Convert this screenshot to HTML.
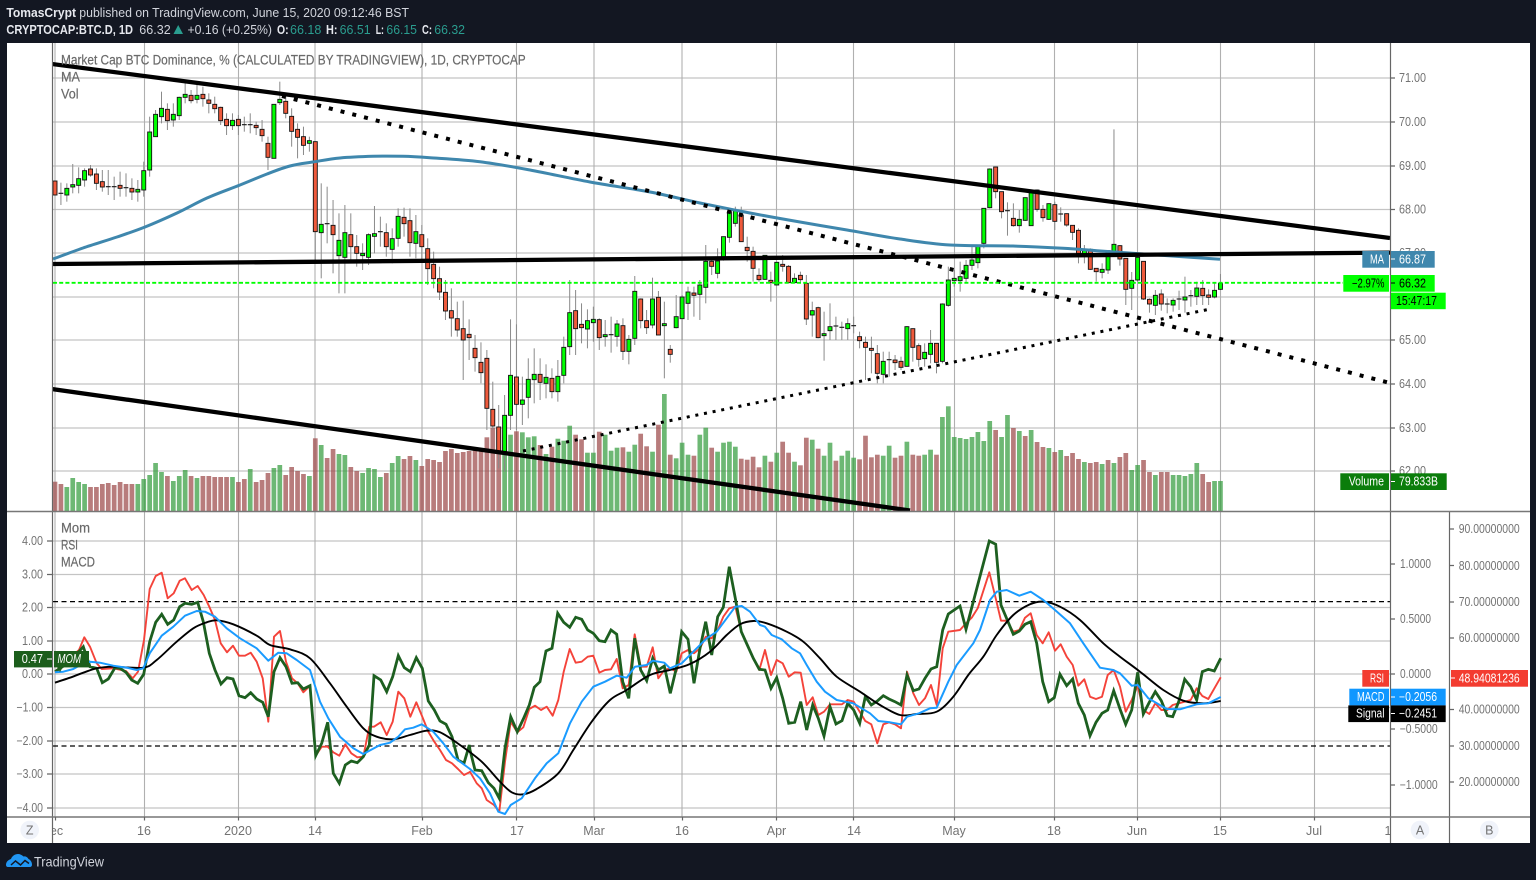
<!DOCTYPE html>
<html><head><meta charset="utf-8"><title>BTC Dominance</title>
<style>
html,body{margin:0;padding:0;background:#131722;width:1536px;height:880px;overflow:hidden}
svg{display:block;font-family:"Liberation Sans",sans-serif;filter:blur(.3px)}
.h{font-size:13px;fill:#d1d4dc}.b{font-weight:bold;fill:#e6e8ee}.t{fill:#2a9d8f}
.l{font-size:13.5px;fill:#6a6a6a;stroke:#6a6a6a;stroke-width:.2px}
.a{font-size:12.5px;fill:#737373}
.w{font-size:12.5px;fill:#fff}.k{font-size:12.5px;fill:#000}
</style></head><body>
<svg id="s" width="1536" height="880" viewBox="0 0 1536 880" xmlns="http://www.w3.org/2000/svg">
<defs>
<clipPath id="c1"><rect x="53" y="43" width="1337" height="468"/></clipPath>
<clipPath id="c2"><rect x="53" y="512" width="1337" height="305"/></clipPath>
<clipPath id="c3"><rect x="53" y="818" width="1337" height="25"/></clipPath>
</defs>
<rect x="7" y="43" width="1523" height="800" fill="#fff"/>
<g id="grid" stroke="#c4c4c4" stroke-width="1.2" fill="none"></g>
<g id="vol" clip-path="url(#c1)"></g>
<g id="cand" clip-path="url(#c1)"></g>
<g clip-path="url(#c1)" fill="none">
<path id="ma" stroke="#3f87ad" stroke-width="3"/>
<path d="M52 64L1390 238" stroke="#000" stroke-width="4.3"/>
<path d="M52 264L1390 252.6" stroke="#000" stroke-width="4.3"/>
<path d="M52 389L910 510.5" stroke="#000" stroke-width="4.3"/>
<path d="M282 96L1390 383" stroke="#000" stroke-width="4" stroke-dasharray="4 8.1"/>
<path d="M523 451L1208 309.5" stroke="#000" stroke-width="3" stroke-dasharray="3 5.8"/>
<path d="M53 282.8H1343" stroke="#00ff00" stroke-width="1.8" stroke-dasharray="4 2.2"/>
</g>
<g clip-path="url(#c2)" fill="none" stroke-linejoin="round">
<path d="M53 601.6H1390M53 746H1390" stroke="#000" stroke-width="1.2" stroke-dasharray="5 3.5"/>
<path id="rsi" stroke="#f4433a" stroke-width="1.9"/>
<path id="mom" stroke="#1d5f20" stroke-width="2.8" stroke-linejoin="miter"/>
<path id="sig" stroke="#000" stroke-width="1.9"/>
<path id="mac" stroke="#1a9bff" stroke-width="2"/>
</g>
<!-- axes -->
<g stroke="#666" stroke-width="1.2" fill="none">
<path d="M52.5 43V843M1390.5 43V843M1449.5 511V843"/>
<path d="M7 511.5H1530M7 817H1530" stroke="#777" stroke-width="1.4"/>
<path d="M47 541h5M47 574.5h5M47 607.5h5M47 641h5M47 674h5M47 707.5h5M47 741h5M47 774h5M47 808h5"/>
<path d="M1391 78h4M1391 122h4M1391 166h4M1391 209.5h4M1391 340h4M1391 384h4M1391 428h4M1391 471h4M1391 564h4M1391 619h4M1391 674h4M1391 729h4M1391 785h4"/>
<path d="M1450 529h4M1450 565.5h4M1450 602h4M1450 638h4M1450 709.5h4M1450 746h4M1450 782h4"/>
<path d="M55.5 817v3.5M144.5 817v3.5M238.5 817v3.5M315.5 817v3.5M422.5 817v3.5M516.5 817v3.5M594.5 817v3.5M682.5 817v3.5M776.5 817v3.5M853.5 817v3.5M954.5 817v3.5M1054.5 817v3.5M1137.5 817v3.5M1220.5 817v3.5M1314.5 817v3.5"/>
</g>
<!-- header -->
<text class="h b" x="6.4" y="17" textLength="69.6" lengthAdjust="spacingAndGlyphs">TomasCrypt</text>
<text class="h" x="79.3" y="17" textLength="329.7" lengthAdjust="spacingAndGlyphs">published on TradingView.com, June 15, 2020 09:12:46 BST</text>
<text class="h b" x="6.4" y="34" textLength="126.6" lengthAdjust="spacingAndGlyphs">CRYPTOCAP:BTC.D, 1D</text>
<text class="h" x="139.3" y="34" textLength="31.4" lengthAdjust="spacingAndGlyphs">66.32</text>
<polygon points="173.5,34 183,34 178.2,25" fill="#2a9d8f"/>
<text class="h" x="187.5" y="34" textLength="84.5" lengthAdjust="spacingAndGlyphs">+0.16 (+0.25%)</text>
<text class="h b" x="277" y="34" textLength="11.6" lengthAdjust="spacingAndGlyphs">O:</text>
<text class="h t" x="290" y="34" textLength="31.4" lengthAdjust="spacingAndGlyphs">66.18</text>
<text class="h b" x="326" y="34" textLength="11.5" lengthAdjust="spacingAndGlyphs">H:</text>
<text class="h t" x="339.6" y="34" textLength="31.1" lengthAdjust="spacingAndGlyphs">66.51</text>
<text class="h b" x="375.7" y="34" textLength="8.3" lengthAdjust="spacingAndGlyphs">L:</text>
<text class="h t" x="386.4" y="34" textLength="30.6" lengthAdjust="spacingAndGlyphs">66.15</text>
<text class="h b" x="422" y="34" textLength="10" lengthAdjust="spacingAndGlyphs">C:</text>
<text class="h t" x="434.3" y="34" textLength="30.7" lengthAdjust="spacingAndGlyphs">66.32</text>
<!-- legends -->
<text class="l" x="61" y="64.5" textLength="464.7" lengthAdjust="spacingAndGlyphs">Market Cap BTC Dominance, % (CALCULATED BY TRADINGVIEW), 1D, CRYPTOCAP</text>
<text class="l" x="61" y="81.5" textLength="19" lengthAdjust="spacingAndGlyphs">MA</text>
<text class="l" x="61" y="98.5" textLength="17.5" lengthAdjust="spacingAndGlyphs">Vol</text>
<text class="l" x="61" y="532.5" textLength="29" lengthAdjust="spacingAndGlyphs">Mom</text>
<text class="l" x="61" y="549.5" textLength="17" lengthAdjust="spacingAndGlyphs">RSI</text>
<text class="l" x="61" y="566.5" textLength="34" lengthAdjust="spacingAndGlyphs">MACD</text>
<!-- left axis -->
<text class="a" x="22" y="545" textLength="21" lengthAdjust="spacingAndGlyphs">4.00</text>
<text class="a" x="22" y="578.5" textLength="21" lengthAdjust="spacingAndGlyphs">3.00</text>
<text class="a" x="22" y="611.5" textLength="21" lengthAdjust="spacingAndGlyphs">2.00</text>
<text class="a" x="22" y="645" textLength="21" lengthAdjust="spacingAndGlyphs">1.00</text>
<text class="a" x="22" y="678" textLength="21" lengthAdjust="spacingAndGlyphs">0.00</text>
<text class="a" x="16.5" y="711.5" textLength="26.5" lengthAdjust="spacingAndGlyphs">−1.00</text>
<text class="a" x="16.5" y="745" textLength="26.5" lengthAdjust="spacingAndGlyphs">−2.00</text>
<text class="a" x="16.5" y="778" textLength="26.5" lengthAdjust="spacingAndGlyphs">−3.00</text>
<text class="a" x="16.5" y="812" textLength="26.5" lengthAdjust="spacingAndGlyphs">−4.00</text>
<!-- price axis -->
<text class="a" x="1399" y="82" textLength="27" lengthAdjust="spacingAndGlyphs">71.00</text>
<text class="a" x="1399" y="126" textLength="27" lengthAdjust="spacingAndGlyphs">70.00</text>
<text class="a" x="1399" y="170" textLength="27" lengthAdjust="spacingAndGlyphs">69.00</text>
<text class="a" x="1399" y="213.5" textLength="27" lengthAdjust="spacingAndGlyphs">68.00</text>
<text class="a" x="1399" y="257" textLength="27" lengthAdjust="spacingAndGlyphs">67.00</text>
<text class="a" x="1399" y="344" textLength="27" lengthAdjust="spacingAndGlyphs">65.00</text>
<text class="a" x="1399" y="388" textLength="27" lengthAdjust="spacingAndGlyphs">64.00</text>
<text class="a" x="1399" y="432" textLength="27" lengthAdjust="spacingAndGlyphs">63.00</text>
<text class="a" x="1399" y="475" textLength="27" lengthAdjust="spacingAndGlyphs">62.00</text>
<text class="a" x="1400" y="568" textLength="31" lengthAdjust="spacingAndGlyphs">1.0000</text>
<text class="a" x="1400" y="623" textLength="31" lengthAdjust="spacingAndGlyphs">0.5000</text>
<text class="a" x="1400" y="678" textLength="31" lengthAdjust="spacingAndGlyphs">0.0000</text>
<text class="a" x="1399.7" y="733" textLength="38" lengthAdjust="spacingAndGlyphs">−0.5000</text>
<text class="a" x="1399.7" y="789" textLength="38" lengthAdjust="spacingAndGlyphs">−1.0000</text>
<text class="a" x="1458.7" y="533" textLength="61" lengthAdjust="spacingAndGlyphs">90.00000000</text>
<text class="a" x="1458.7" y="570" textLength="61" lengthAdjust="spacingAndGlyphs">80.00000000</text>
<text class="a" x="1458.7" y="606" textLength="61" lengthAdjust="spacingAndGlyphs">70.00000000</text>
<text class="a" x="1458.7" y="642" textLength="61" lengthAdjust="spacingAndGlyphs">60.00000000</text>
<text class="a" x="1458.7" y="713.5" textLength="61" lengthAdjust="spacingAndGlyphs">40.00000000</text>
<text class="a" x="1458.7" y="750" textLength="61" lengthAdjust="spacingAndGlyphs">30.00000000</text>
<text class="a" x="1458.7" y="786" textLength="61" lengthAdjust="spacingAndGlyphs">20.00000000</text>
<!-- time axis -->
<g clip-path="url(#c3)" text-anchor="middle">
<text class="a" x="52" y="835">Dec</text>
<text class="a" x="144" y="835">16</text>
<text class="a" x="238" y="835">2020</text>
<text class="a" x="315" y="835">14</text>
<text class="a" x="422" y="835">Feb</text>
<text class="a" x="517" y="835">17</text>
<text class="a" x="594" y="835">Mar</text>
<text class="a" x="682" y="835">16</text>
<text class="a" x="776.5" y="835">Apr</text>
<text class="a" x="854" y="835">14</text>
<text class="a" x="954" y="835">May</text>
<text class="a" x="1054" y="835">18</text>
<text class="a" x="1137" y="835">Jun</text>
<text class="a" x="1220" y="835">15</text>
<text class="a" x="1314" y="835">Jul</text>
<text class="a" x="1388" y="835">1</text>
</g>
<g text-anchor="middle">
<circle cx="29.7" cy="830" r="9.3" fill="#f0f3fa"/><text class="a" x="29.7" y="834.5">Z</text>
<circle cx="1420" cy="830" r="9.3" fill="#f0f3fa"/><text class="a" x="1420" y="834.5">A</text>
<circle cx="1489.3" cy="830" r="9.3" fill="#f0f3fa"/><text class="a" x="1489.3" y="834.5">B</text>
</g>
<!-- price labels -->
<rect x="1362.3" y="251" width="26.7" height="16.7" fill="#3f87ad"/><rect x="1391" y="251" width="43.7" height="16.7" fill="#3f87ad"/>
<text class="w" x="1370" y="263.5" textLength="14" lengthAdjust="spacingAndGlyphs">MA</text>
<text class="w" x="1399" y="263.5" textLength="27" lengthAdjust="spacingAndGlyphs">66.87</text>
<path d="M1391 259h4" stroke="#fff"/>
<rect x="1343.3" y="275" width="45.7" height="16.7" fill="#00ff00"/><rect x="1391" y="275" width="43.7" height="16.7" fill="#00ff00"/>
<text class="k" x="1352" y="287.5" textLength="32.5" lengthAdjust="spacingAndGlyphs">−2.97%</text>
<text class="k" x="1399" y="287.5" textLength="27" lengthAdjust="spacingAndGlyphs">66.32</text>
<path d="M1391 283h4" stroke="#000"/>
<rect x="1391" y="292.7" width="54.7" height="16.5" fill="#00ff00"/>
<text class="k" x="1396" y="305" textLength="41" lengthAdjust="spacingAndGlyphs">15:47:17</text>
<rect x="1340.3" y="473.3" width="48.7" height="16.7" fill="#0b7d0b"/><rect x="1391" y="473.3" width="55.7" height="16.7" fill="#0b7d0b"/>
<text class="w" x="1348.7" y="485.7" textLength="35.3" lengthAdjust="spacingAndGlyphs">Volume</text>
<text class="w" x="1399" y="485.7" textLength="39" lengthAdjust="spacingAndGlyphs">79.833B</text>
<path d="M1391 481.5h4" stroke="#fff"/>
<rect x="1362.3" y="670" width="26.7" height="16.7" fill="#f33c30"/><rect x="1451" y="670" width="77" height="16.7" fill="#f33c30"/>
<text class="w" x="1370" y="682.5" textLength="14" lengthAdjust="spacingAndGlyphs">RSI</text>
<text class="w" x="1458.7" y="682.5" textLength="61" lengthAdjust="spacingAndGlyphs">48.94081236</text>
<path d="M1451 678h4" stroke="#fff"/>
<rect x="1349.3" y="688.7" width="39.7" height="16.7" fill="#1097ff"/><rect x="1391" y="688.7" width="54.7" height="16.7" fill="#1097ff"/>
<text class="w" x="1357" y="701" textLength="27.5" lengthAdjust="spacingAndGlyphs">MACD</text>
<text class="w" x="1399" y="701" textLength="38" lengthAdjust="spacingAndGlyphs">−0.2056</text>
<path d="M1391 697h4" stroke="#fff"/>
<rect x="1348.3" y="705.4" width="40.7" height="16.7" fill="#000"/><rect x="1391" y="705.4" width="54.7" height="16.7" fill="#000"/>
<text class="w" x="1356" y="717.7" textLength="28.5" lengthAdjust="spacingAndGlyphs">Signal</text>
<text class="w" x="1399" y="717.7" textLength="38" lengthAdjust="spacingAndGlyphs">−0.2451</text>
<path d="M1391 713.5h4" stroke="#fff"/>
<!-- MOM label -->
<rect x="14" y="651" width="38" height="16.4" fill="#1c5e1c"/>
<rect x="54" y="651" width="35" height="16.4" fill="#1c5e1c"/>
<polygon points="57,667 63,667 60,672" fill="#1c5e1c"/>
<text class="w" x="21.7" y="663" textLength="21.3" lengthAdjust="spacingAndGlyphs">0.47</text>
<text class="w" x="57.5" y="663" textLength="23.5" lengthAdjust="spacingAndGlyphs" font-style="italic">MOM</text>
<path d="M47 659h5" stroke="#fff"/>
<!-- footer logo -->
<path fill="#2196f3" d="M6 865c0-3 2-5 5-6 1-3 4-5 7-5 2 0 4 1 5.500 2.500 2-.5 4 .5 5 2.500 2 1 3.500 3 3.500 5.500 0 2-1 2.500-2.500 2.500H8c-1.300 0-2-1-2-2z"/>
<path d="M11 865l4.500-4 5 4 4.500-4.500 4 3" fill="none" stroke="#131722" stroke-width="1.500"/>
<text x="34" y="866.500" font-size="14" fill="#d1d4dc" textLength="70" lengthAdjust="spacingAndGlyphs">TradingView</text>
</svg>
<script>
var NS="http://www.w3.org/2000/svg";
function el(p,t,a){var e=document.createElementNS(NS,t);for(var k in a)e.setAttribute(k,a[k]);document.getElementById(p).appendChild(e);return e}
var X=function(i){return 55+5.916*i};
// grid
var gp="";[78,122,166,209.5,253,297,340,384,428,471,541,574.5,607.5,641,674,707.5,741,774,808].forEach(function(y){gp+="M53 "+y+"H1390"});
el("grid","path",{d:gp});
var vp="";[55,144.5,238.5,315,422,516.500,594,682,776.500,853.500,954.500,1054.500,1137.500,1220.500,1314.500].forEach(function(x){vp+="M"+x+" 43V511M"+x+" 512V817"});
el("grid","path",{d:vp,stroke:"#b0b0b0","stroke-width":"1.1"});
// volume
function vols(s,off,start){s.split(" ").forEach(function(t,j){var i=start+j,y=off+(+t.slice(1))/3;
el("vol","rect",{x:(X(i)-2.35).toFixed(2),y:y.toFixed(1),width:4.7,height:(511-y).toFixed(1),fill:t[0]=="r"?"rgba(160,80,80,.75)":"rgba(60,160,70,.75)"})})}
vols("r155 r162 g171 g144 g156 g162 r171 r171 r162 r159 r165 r156 r162 r162 g162 g147 g135 g99 g126 r138 g153 g138 g120 r138 g144 r138 r138 r141 r141 r141 g141 r156 r147 g117 r156 r150 r129 g114 g105 r135 r111 r123 r132 g138 r25 g45 r84 r57 g72 g75 r111 r123 g129 g114 g117 g141 r129 g99 g78 r87 r78 g90 r108 r87 r90 r96 r63 r57 r69 r66 r63 r60 r63",430,0);
vols("r622 r593 r595 g600 g614 r604 g607 g622 g619 r645 g672 r650 g626 g632 g587 r614 r628 g668 g668 r605 g614 g662 g653 r652 g665 g644 r611 r649 g665 r584 g492 r674 g685 g638 g674 r677 g614 g593 r653 g665 g638 g635 g650 r686 r689 r680 r712 g677 r695 g668 r635 r668 g695 r706 r623 g629 r656 g677 g638 r692 g677 g662 g683 r688 r617 r682 r674 g677 g647 r683 r677 g635 r674 r677 g674 g659 r674 g561 g529",230,73);
var abs="g437 g438 g439 g437 g432 g441 g421 r430 g437 g415 r428 g431 r436 g430 r442 r447 g448 r452 g450 r456 r453 r459 g462 r463 r462 g464 r460 g463 r457 r453 g470 g465 r460 r472 g475 r472 r472 g475 g475 g476 g474 g463 r474 r482 g481 g481";
abs.split(" ").forEach(function(t,j){var i=152+j,y=+t.slice(1);el("vol","rect",{x:(X(i)-2.35).toFixed(2),y:y,width:4.7,height:511-y,fill:t[0]=="r"?"rgba(160,80,80,.75)":"rgba(60,160,70,.75)"})});
// candles: type,top,bot,wickTop,wickBot in zoom coordinates
function cand(s,off,start){s.split(";").forEach(function(t,j){var a=t.split(","),i=start+j,x=X(i),f=function(v){return off+(+v)/3};
el("cand","line",{x1:x,x2:x,y1:f(a[3]),y2:f(a[4]),stroke:"#8a8a8a","stroke-width":"1"});
if(a[0]=="d"){el("cand","rect",{x:x-2.4,y:f(a[1])-.6,width:4.8,height:1.2,fill:"#222"})}
else{el("cand","rect",{x:x-2,y:f(a[1]),width:4,height:Math.max(f(a[2])-f(a[1]),1),fill:a[0]=="r"?"#ee5a3c":"#00ff00",stroke:"#111","stroke-width":".9"})}})}
cand("r,303,345,303,345;d,340,340,308,375;g,325,345,310,365;g,314,321,252,340;g,296,316,262,340;g,272,300,265,320;r,267,285,255,290;r,282,310,265,330;r,305,321,270,335;d,320,320,270,345;d,320,320,290,360;r,316,325,275,350;d,323,323,280,350;r,325,336,295,360;g,328,336,300,365;g,272,330,245,350;g,156,270,110,290;g,103,170,90,170;g,85,110,35,130;r,88,122,70,150;g,103,120,70,140;g,52,107,50,120;g,43,52,10,70;r,46,62,30,70;g,46,58,15,70;r,43,56,20,80;r,60,70,40,100;r,73,86,50,100;r,82,122,80,135;r,118,137,100,165;g,121,137,100,150;r,118,137,105,165;d,134,134,110,155;d,134,134,100,160;r,136,143,125,165;r,148,167,120,185;r,190,232,170,270;g,73,235,73,235;g,58,68,5,75;r,64,100,50,115;r,109,154,85,200;r,148,172,130,235;r,170,196,140,225;g,182,190,170,215;r,185,455,185,540;g,433,458,310,595;d,431,431,320,490;r,436,464,360,580;g,481,527,400,640;g,458,532,375,640;r,464,500,400,540;r,500,520,465,560;g,520,527,490,570;g,464,532,460,555;g,461,469,378,520;d,455,455,410,500;r,458,500,430,530;g,476,508,445,550;g,409,475,385,500;r,412,431,383,470;r,422,488,385,530;g,455,490,405,535;r,464,500,435,545;r,506,566,475,615;r,553,596,515,625;r,596,636,560,660;r,637,693,600,720",80,0);
cand("r,242,264,175,320;r,266,300,215,320;r,296,330,212,450;r,313,323,268,390;r,355,383,315,425;r,397,428,337,460;r,385,535,360,600;r,538,588,455,600;r,591,665,525,715;g,556,665,495,725;g,436,556,268,600;r,441,523,283,600;g,510,523,440,585;g,448,502,385,565;g,433,449,355,520;r,433,457,385,510;g,442,460,403,505;r,445,485,415,505;g,439,485,390,515;g,352,436,320,460;g,248,350,150,375;r,242,296,180,375;r,283,293,220,340;g,272,297,238,355;g,268,278,230,335;r,269,323,265,360;g,314,320,270,350;d,314,314,260,368;g,282,319,270,350;r,287,364,265,390;g,328,364,315,403;g,184,325,138,345;r,207,272,205,295;r,272,293,240,312;g,207,285,143,295;r,202,315,183,315;g,281,287,215,445;r,358,373,345,398;g,260,293,195,295;g,201,266,195,330;g,186,220,170,270;r,189,196,170,260;g,165,193,150,270;g,94,172,45,220;r,94,109,90,135;g,93,130,55,145;g,20,88,20,92;g,-55,22,-60,38;g,-60,-20,-70,-10;r,-45,35,-70,35;r,52,62,20,95;r,64,115,50,155;r,136,149,115,155;g,76,148,76,150;r,151,158,125,215;g,97,165,95,165;r,103,109,75,125;r,109,158,105,160;g,145,158,130,160;r,136,149,125,160;r,160,267,135,285;g,242,255,215,320;r,233,323,230,325;g,311,317,245,392;g,290,302,220,330;d,288,288,260,330;d,292,292,275,330;g,281,296,265,330;d,287,287,260,310;r,320,332,305,355;r,337,352,320,450;r,355,361,320,430;r,371,430,345,460;g,394,433,365,460;d,389,389,365,440;r,390,398,375,420;r,394,412,380,420;g,290,409,288,410;r,296,352,295,395;r,347,388,340,410;g,367,386,340,410;g,340,373,300,400;r,340,397,340,430;g,222,394,220,400;g,150,226,110,230",230,67);
cand("g,475,482,450,500;g,470,482,425,515;g,436,475,420,490;g,420,436,375,450;g,376,428,375,445;g,265,370,265,385;g,147,263,145,265;r,141,215,140,235;r,215,275,215,295;d,272,272,247,347;r,295,317,250,320;g,298,317,270,338;g,233,301,232,303;g,218,317,215,318;r,210,268,208,275;r,268,293,255,305;g,251,298,250,300;r,254,304,245,330;d,282,282,262,305;r,281,315,280,320;r,316,337,315,360;r,331,400,325,430;g,390,402,375,430;r,388,448,385,450;r,445,455,445,485;g,448,457,430,475;g,392,450,390,462;g,373,394,28,395;r,377,417,375,437;r,415,508,415,555;g,481,505,456,570;g,412,480,410,485;r,424,537,424,540;r,538,552,535,578;g,526,556,510,585;r,522,552,508,572;d,552,552,535,580;g,541,555,535,575;d,537,537,512,570;g,531,540,470,578;d,527,527,510,560;g,504,529,485,555;r,505,527,480,555;r,525,532,508,555;g,511,531,490,535;g,490,508,462,510",120,152);
// lines
function smooth(P){var d="M"+P[0][0].toFixed(1)+" "+P[0][1].toFixed(1);for(var i=0;i<P.length-1;i++){var a=P[Math.max(i-1,0)],b=P[i],c=P[i+1],e=P[Math.min(i+2,P.length-1)];
d+="C"+(b[0]+(c[0]-a[0])/6).toFixed(1)+" "+(b[1]+(c[1]-a[1])/6).toFixed(1)+" "+(c[0]-(e[0]-b[0])/6).toFixed(1)+" "+(c[1]-(e[1]-b[1])/6).toFixed(1)+" "+c[0].toFixed(1)+" "+c[1].toFixed(1)}return d}
function line(id,segs,sm){var P=[],last=-1;segs.forEach(function(s){var ox=s[0];s[1].split(" ").forEach(function(p){var a=p.split(","),x=ox+(+a[0])/3,y=515+(+a[1])/3;if(x<=last)return;P.push([x,y]);last=x})});
document.getElementById(id).setAttribute("d",sm?smooth(P):"M"+P.map(function(q){return q[0].toFixed(1)+" "+q[1].toFixed(1)}).join("L"))}
document.getElementById("ma").setAttribute("d",smooth([[53,259],[83,248],[117,237],[145,227],[177,213],[207,198],[240,185],[267,174],[290,166],[313,162],[340,158],[373,156.3],[403,156.3],[430,157.7],[480,161.7],[530,170],[590,182],[650,192],[700,203],[750,213],[800,222],[847,230],[900,239],[950,245],[1013,246],[1063,248.3],[1097,250.7],[1147,254.3],[1220,259.3]]));
line("mom",[[0,"165,470 210,440 250,395 270,455 290,460 307,503 325,492 345,458 360,460 378,472 395,495 413,505 431,478 449,380 467,322 485,298 503,328 521,315 539,275 555,265 575,268 593,262 610,320 628,415 645,465 663,507 681,488 699,492 717,542 735,548 752,533 770,552 788,562 805,605 822,470 840,428 858,455 876,505 893,503 910,522 930,512 947,722 965,685 983,622 1000,775 1018,805 1036,750 1054,738 1072,743 1090,725 1108,690 1122,482 1142,495 1160,530 1178,485 1195,422 1213,458 1231,470 1249,428 1267,460 1285,558 1303,585 1320,618 1338,628 1356,665 1374,735 1392,745 1408,690"],[470,"0,705 15,765 35,767 55,803 72,820 88,850 105,700 122,605 142,650 160,612 178,570 193,517 210,500 228,408 246,400 263,295 281,322 299,337 317,307 335,313 353,345 370,355 388,377 405,380 423,345 440,358 458,500 476,550 494,370 512,465 530,497 548,430 565,465 583,453 601,535 619,460 635,350 654,373 672,505 690,400 707,320 725,420 743,305 760,277 778,155 796,250 814,350 832,390 850,430 868,463 885,465 903,520 920,488 938,550 956,625 974,622 992,560 1010,645 1028,570 1045,610 1062,663 1080,575 1098,627 1116,617 1133,565 1151,585 1169,625 1186,545 1204,570 1222,558 1240,542 1257,552 1275,560 1293,570 1311,480 1330,527 1347,522 1365,490 1383,462 1400,455"],[940,"8,345 25,297 60,273 78,343 113,210 148,78 167,88 183,270 220,358 238,348 255,328 272,320 290,385 308,500 326,560 343,548 360,478 380,512 398,492 415,565 433,600 450,662 468,622 486,595 503,585 521,527 540,582 557,628 575,585 593,472 610,597 628,562 646,530 664,557 682,602 698,605 716,560 734,493 752,515 770,555 787,470 805,463 823,468 842,430"]]);
line("rsi",[[0,"165,470 220,420 237,405 253,367 270,395 290,445 305,462 340,460 378,468 398,490 414,470 432,375 449,222 467,183 485,173 503,250 521,235 539,197 555,190 575,225 593,213 611,240 628,275 645,315 662,385 681,412 699,392 717,422 735,422 752,413 770,440 788,490 805,620 822,365 840,348 858,440 876,490 893,505 910,532 930,512 947,722 965,695 983,695 1000,712 1018,722 1036,688 1054,715 1072,727 1090,725 1108,635 1122,635 1142,622 1160,660 1178,620 1195,530 1213,550 1231,605 1249,562 1267,605 1285,650 1303,680 1320,705 1338,735 1356,745 1374,762 1392,780 1408,772"],[470,"0,770 20,805 35,820 50,855 72,870 88,890 105,740 122,620 142,652 160,637 178,582 195,572 213,585 230,575 248,602 265,555 281,470 299,402 317,443 335,440 353,425 370,422 388,473 405,465 423,463 440,432 458,520 476,510 494,358 512,455 530,455 548,397 565,490 583,465 601,460 619,470 635,415 654,405 672,415 690,400 707,365 725,370 743,345 760,305 778,280 796,275 814,350 832,390 850,430 868,465 885,405 903,480 920,435 938,445 956,485 974,472 992,473 1010,570 1028,547 1045,600 1062,590 1080,568 1098,568 1116,568 1133,555 1151,560 1169,590 1186,618 1204,628 1222,685 1240,628 1257,622 1275,628 1293,640 1311,470 1330,535 1347,570 1365,550 1383,510 1400,570"],[940,"8,400 25,350 60,345 78,325 95,308 113,280 148,172 167,250 183,317 200,317 220,350 238,345 255,308 272,295 290,360 308,385 326,352 345,407 362,388 380,425 398,450 415,512 433,493 450,545 468,552 486,545 503,480 521,465 540,515 557,590 575,555 593,512 610,585 628,597 646,565 664,585 682,585 698,570 716,565 734,560 752,555 770,520 787,543 805,552 842,487"]]);
line("mac",[[0,"165,472 190,470 220,462 245,448 270,440 300,443 340,452 380,458 410,465 430,460 449,415 485,362 520,335 555,302 590,288 615,290 645,305 680,340 720,370 770,400 805,437 835,413 860,415 890,435 930,465 960,560 985,610 1020,665 1060,700 1090,717 1140,690 1170,683 1195,665 1215,643 1240,638 1265,628 1300,650 1330,685 1360,725 1410,762"],[470,"30,790 60,835 85,890 105,897 122,870 155,850 195,790 230,745 265,715 300,625 335,560 370,515 405,500 440,482 470,488 495,455 530,450 548,437 583,443 600,460 635,445 670,410 710,370 740,350 770,310 796,275 815,273 840,290 870,330 885,335 905,360 935,373 965,400 990,415 1010,450 1040,500 1065,530 1100,555 1150,565 1200,595 1225,618 1260,622 1293,628 1311,605 1347,595 1380,580 1400,578"],[940,"25,500 50,450 100,385 120,345 150,255 170,230 200,225 238,242 272,230 310,255 345,285 390,325 430,385 480,458 520,465 540,475 575,512 593,510 625,550 680,582 720,583 770,568 805,565 842,546"]]);
line("sig",[[0,"165,503 210,488 250,473 290,460 340,455 430,458 470,435 530,380 580,340 620,322 650,316 700,328 770,362 810,390 870,403 930,430 990,505 1040,575 1090,640 1130,665 1180,673 1230,660 1280,647 1320,652 1380,690"],[470,"35,740 90,800 125,832 160,838 200,822 265,775 310,705 365,620 420,555 470,525 540,480 600,465 660,447 720,410 770,360 810,328 850,318 890,325 950,350 1000,380 1050,430 1100,485 1170,530 1230,570 1290,600 1340,597 1400,590"],[940,"40,545 85,480 130,425 170,360 220,300 270,268 310,260 360,275 420,315 490,385 540,425 600,470 670,525 730,557 790,565 842,558"]],true);
</script>
</body></html>
